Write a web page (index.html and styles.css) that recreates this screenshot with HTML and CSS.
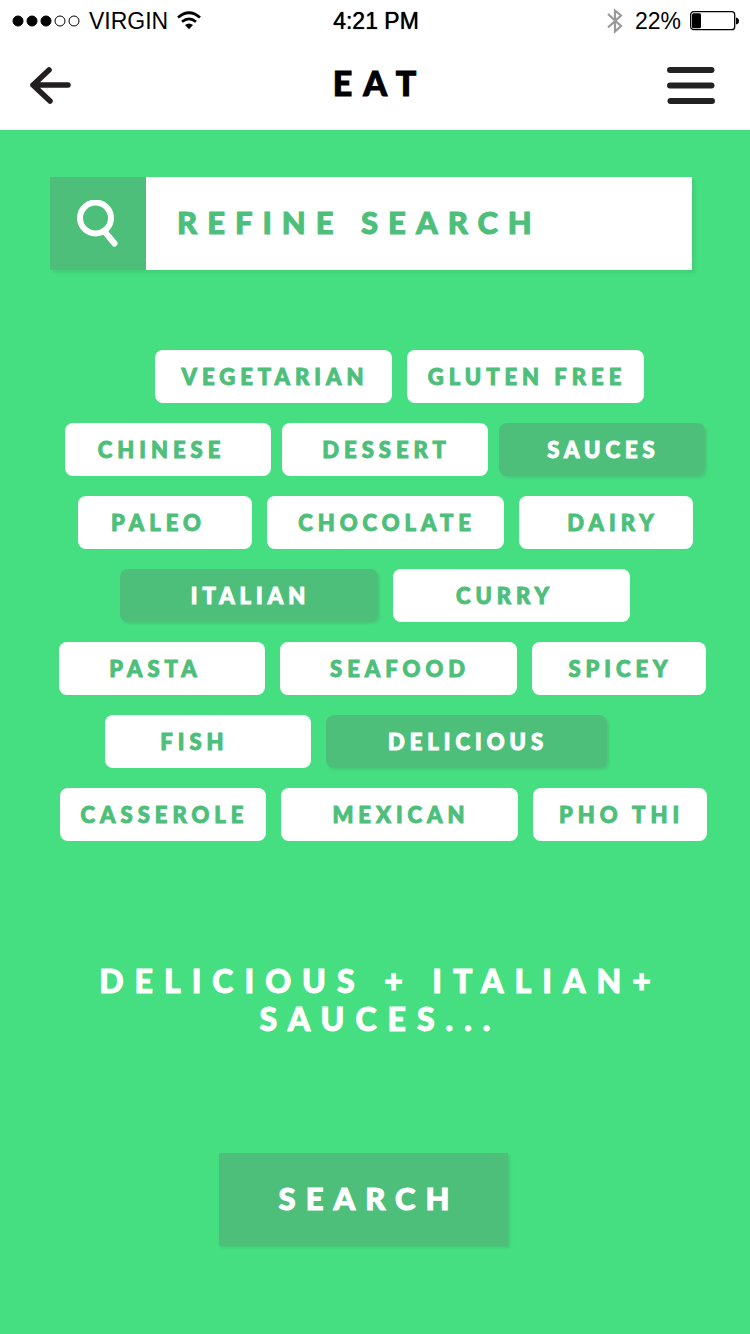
FILE: index.html
```html
<!DOCTYPE html>
<html lang="en">
<head>
<meta charset="utf-8">
<meta name="viewport" content="width=device-width, initial-scale=1">
<title>Eat</title>
<link rel="stylesheet" href="styles.css">
</head>
<body>
<div class="status">
  <div class="status-side">
    <svg class="signal" viewBox="0 0 68 14" aria-hidden="true">
      <g stroke="#000"><circle cx="6" cy="7" r="5"/><circle cx="20" cy="7" r="5"/><circle cx="34" cy="7" r="5"/><circle cx="48" cy="7" r="5" fill="#fff"/><circle cx="62" cy="7" r="5" fill="#fff"/></g>
    </svg>
    <span>VIRGIN</span>
    <svg class="wifi" viewBox="0 0 24 20" aria-hidden="true">
      <path d="M1 6.500Q12-3 23 6.500M5 10.800Q12 5 19 10.800" fill="none" stroke="#000" stroke-width="2.700"/>
      <path d="M8 14Q12 10.800 16 14L12 18.300Z"/>
    </svg>
  </div>
  <span class="time">4:21 PM</span>
  <div class="status-side status-end">
    <svg class="bluetooth" viewBox="0 0 16 26" aria-hidden="true">
      <path d="M1 6L14 18L8 23.500V2.500L14 7.500L1 19.500" fill="none" stroke="#999" stroke-width="2.200"/>
    </svg>
    <span>22%</span>
    <svg class="battery" viewBox="0 0 50 20" aria-hidden="true">
      <rect x=".7" y=".7" width="44" height="18" rx="3" fill="#fff" stroke="#000" stroke-width="1.300"/>
      <rect x="2" y="2.200" width="9" height="15" rx="1.500"/>
      <path d="M46 6.500Q49 7 49 10T46 13.500Z"/>
    </svg>
  </div>
</div>
<header class="nav">
  <button class="nav-button" type="button" aria-label="Back">
    <svg class="back" viewBox="0 0 42 38"><path d="M20 3L4 18L21 34M4 18H39" fill="none" stroke="#231f20" stroke-width="5.500" stroke-linecap="round" stroke-linejoin="round"/></svg>
  </button>
  <h1 class="title">EAT</h1>
  <button class="nav-button nav-end" type="button" aria-label="Menu">
    <svg class="menu" viewBox="0 0 48 38"><path d="M3 3H44.500M3 18.500H44.500M3.500 34H45" fill="none" stroke="#222" stroke-width="6" stroke-linecap="round"/></svg>
  </button>
</header>
<main class="page">
  <form class="refine">
    <label class="refine-icon" for="refine" aria-label="Refine search">
      <svg class="glass" viewBox="0 0 42 47"><circle cx="18.500" cy="18" r="15.500" fill="none" stroke="#fff" stroke-width="6"/><path d="M28 32L37.500 43.500" stroke="#fff" stroke-width="6" stroke-linecap="round"/></svg>
    </label>
    <input class="refine-input" id="refine" type="text" placeholder="REFINE SEARCH">
  </form>
  <div class="tags">
    <div class="row row-1">
      <button class="tag wide" type="button">VEGETARIAN</button>
      <button class="tag wide" type="button">GLUTEN FREE</button>
    </div>
    <div class="row row-2">
      <button class="tag mid lean" type="button">CHINESE</button>
      <button class="tag mid" type="button">DESSERT</button>
      <button class="tag mid on" type="button" aria-pressed="true">SAUCES</button>
    </div>
    <div class="row row-3">
      <button class="tag narrow lean" type="button">PALEO</button>
      <button class="tag wide" type="button">CHOCOLATE</button>
      <button class="tag narrow lean-end" type="button">DAIRY</button>
    </div>
    <div class="row row-4">
      <button class="tag large on" type="button" aria-pressed="true">ITALIAN</button>
      <button class="tag wide lean" type="button">CURRY</button>
    </div>
    <div class="row row-5">
      <button class="tag mid lean" type="button">PASTA</button>
      <button class="tag wide" type="button">SEAFOOD</button>
      <button class="tag narrow" type="button">SPICEY</button>
    </div>
    <div class="row row-6">
      <button class="tag mid lean-far" type="button">FISH</button>
      <button class="tag largest on" type="button" aria-pressed="true">DELICIOUS</button>
    </div>
    <div class="row row-7">
      <button class="tag mid" type="button">CASSEROLE</button>
      <button class="tag wide" type="button">MEXICAN</button>
      <button class="tag narrow" type="button">PHO THI</button>
    </div>
  </div>
  <p class="summary">DELICIOUS + ITALIAN+<br>SAUCES...</p>
  <button class="search" type="button">SEARCH</button>
</main>
</body>
</html>
```

FILE: styles.css
```css
* { box-sizing: border-box; }

body {
  margin: 0;
  min-height: 100vh;
  display: flex;
  flex-direction: column;
  background: #fff;
  color: #000;
  font-family: Lato, sans-serif;
}

button, input {
  margin: 0;
  padding: 0;
  border: 0;
  border-radius: 0;
  background: none;
  font-family: inherit;
}

svg { display: block; flex: none; }

.title, .refine-input, .tag, .summary, .search {
  font-weight: 900;
  -webkit-text-stroke: 1px currentColor;
}

.status {
  display: grid;
  grid-template-columns: 1fr auto 1fr;
  align-items: center;
  height: 42px;
  padding: 0 10px 0 12px;
  font: 23px/42px "Liberation Sans", Arial, sans-serif;
}

.status-side { display: flex; align-items: center; gap: 9px; }
.status-end { justify-content: flex-end; }
.time { text-shadow: 0 0 1px #000; }
.signal { width: 68px; height: 14px; }
.wifi { width: 24px; height: 20px; }
.bluetooth { width: 16px; height: 26px; margin-right: 3px; }
.battery { width: 50px; height: 20px; }

.nav {
  display: grid;
  grid-template-columns: 1fr auto 1fr;
  align-items: center;
  height: 88px;
  padding: 0 35px 0 29px;
}

.nav-button { justify-self: start; cursor: pointer; }
.nav-end { justify-self: end; }
.back { width: 42px; height: 38px; }
.menu { width: 48px; height: 38px; }

.title {
  margin: 0;
  padding: 0 0 6px 16px;
  font-size: 34px;
  line-height: 40px;
  letter-spacing: 11px;
}

.page {
  flex: 1;
  display: flex;
  flex-direction: column;
  align-items: center;
  padding: 47px 0;
  background: #45de80;
}

.refine {
  align-self: stretch;
  display: flex;
  height: 93px;
  margin: 0 58px 0 50px;
  box-shadow: 3px 3px 2px #43d079;
}

.refine-icon {
  flex: none;
  display: grid;
  place-items: center;
  width: 96px;
  background: #4ebf7b;
}

.glass { width: 42px; height: 47px; }

.refine-input {
  flex: 1;
  min-width: 0;
  padding: 0 31px 3px;
  background: #fff;
  color: #4ebf7b;
  font-size: 31px;
  letter-spacing: 10px;
}

.refine-input::placeholder { color: #4ebf7b; opacity: 1; }

.tags {
  align-self: stretch;
  display: flex;
  flex-direction: column;
  gap: 20px;
  margin-top: 80px;
}

.row { display: flex; gap: 15px; padding-right: 40px; }
.row-1 { padding-left: 155px; }
.row-2 { padding-left: 65px; gap: 11px; }
.row-3 { padding-left: 78px; }
.row-4 { padding-left: 120px; }
.row-5 { padding-left: 59px; }
.row-6 { padding-left: 105px; }
.row-7 { padding-left: 60px; }

.tag {
  min-height: 53px;
  padding-left: 3px;
  border-radius: 8px;
  background: #fff;
  color: #4ebf7b;
  font-size: 22px;
  line-height: 27px;
  letter-spacing: 5px;
  white-space: nowrap;
  cursor: pointer;
}

.narrow { width: 174px; }
.mid { width: 206px; }
.wide { width: 237px; }
.large { width: 258px; }
.largest { width: 281px; }
.lean { padding-right: 16px; }
.lean-far { padding-right: 30px; }
.lean-end { padding-left: 14px; }

.on {
  background: #4ebf7b;
  color: #fff;
  box-shadow: 2px 2px 2px #49cb7b;
}

.summary {
  margin: 121px 0 0;
  padding-left: 11px;
  color: #fff;
  font-size: 32px;
  line-height: 38px;
  letter-spacing: 11px;
  text-align: center;
}

.search {
  width: 289px;
  height: 93px;
  margin: 115px 24px 0 0;
  padding: 0 0 3px 12px;
  background: #4ebf7b;
  box-shadow: 2px 2px 2px #49cb7b;
  color: #fff;
  font-size: 31px;
  letter-spacing: 10px;
  cursor: pointer;
}
```
